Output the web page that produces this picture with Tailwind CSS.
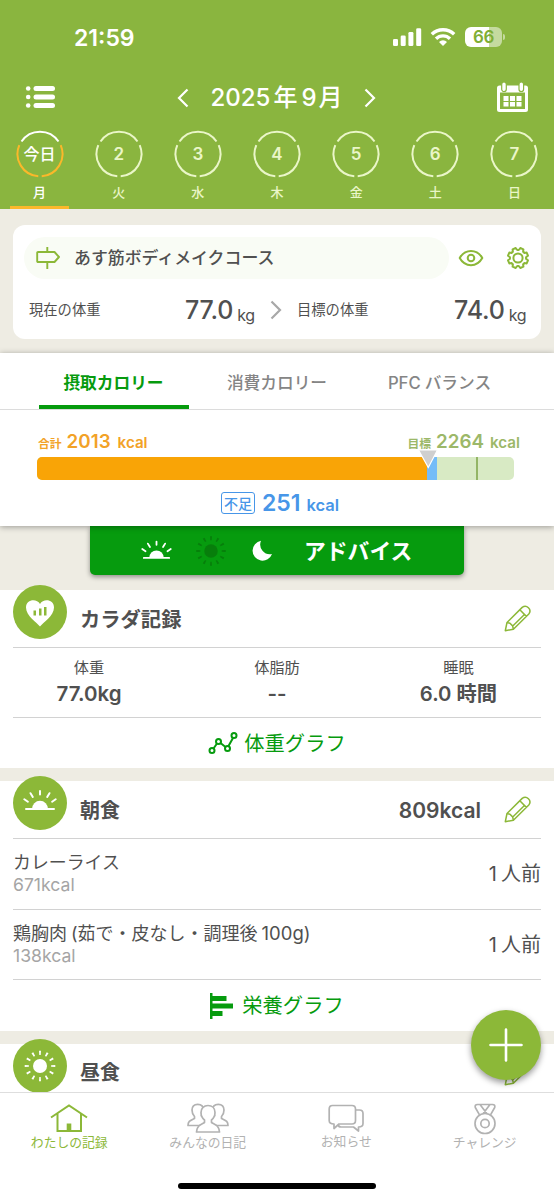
<!DOCTYPE html>
<html lang="ja">
<head>
    <meta charset="UTF-8">
    <meta name="viewport" content="width=device-width, initial-scale=1.0">
    <title>わたしの記録</title>
    <script src="https://cdn.jsdelivr.net/npm/@tailwindcss/browser@4"></script>
</head>

<body class="bg-[#eeece3] text-[#505050] font-['Inter','Noto_Sans_CJK_JP',sans-serif] leading-none whitespace-nowrap">

  <!-- shared icons -->
  <svg class="hidden">
    <symbol id="ring-top" viewBox="0 0 48 48"><path d="M5.5 11.5A22.3 22.3 0 0 1 42.5 11.5" fill="none" stroke="currentColor" stroke-width="2"/></symbol>
    <symbol id="ring-bottom" viewBox="0 0 48 48"><path d="M44.7 15.2A22.3 22.3 0 0 1 25.7 46.2M22.3 46.2A22.3 22.3 0 0 1 3.3 15.2" fill="none" stroke="currentColor" stroke-width="2"/></symbol>
    <symbol id="sunrise" viewBox="0 0 54 54">
      <path d="M13 33H41M27 15V18.5M17.5 17.2L19.8 21M36.5 17.2L34.2 21M11.3 23.2L14.9 25.7M42.7 23.2L39.1 25.7" stroke="currentColor" stroke-width="2" stroke-linecap="round"/>
      <path d="M19 33a8 8.3 0 0 1 16 0z" fill="currentColor"/>
    </symbol>
    <symbol id="sun" viewBox="0 0 54 54">
      <circle cx="27" cy="27" r="7" fill="currentColor"/>
      <circle cx="27" cy="27" r="13.2" fill="none" stroke="currentColor" stroke-width="4.2" pathLength="120" stroke-dasharray="2.6 7.4" stroke-dashoffset="1.3"/>
    </symbol>
    <symbol id="pencil" viewBox="0 0 27 27">
      <path d="M1.3 25.7L3 17.5L18.2 2.4a4.7 4.7 0 0 1 6.6 6.6L9.4 24.2ZM3 17.5L6 18.3L8.6 20.9L9.4 24.2M15.8 4.8L22.4 11.4M20.2 9.8L9 20.8" fill="none" stroke="currentColor" stroke-width="1.5" stroke-linejoin="round"/>
    </symbol>
  </svg>

  <header class="h-[209px] bg-[#8ab53f] text-white">
    <div class="h-[75px] flex justify-between pl-[74px] pr-[49px]">
      <div class="text-[23px] font-semibold pt-[27px]">21:59</div>
      <div class="flex pt-[27px]">
        <svg class="w-[30px] h-5" viewBox="0 0 30 20" fill="currentColor"><rect x="1" y="12" width="5" height="7" rx="1.3"/><rect x="8.7" y="8.5" width="5" height="10.5" rx="1.3"/><rect x="16.4" y="5" width="5" height="14" rx="1.3"/><rect x="24.2" y="1.3" width="5" height="17.7" rx="1.3"/></svg>
        <svg class="w-[26px] h-5 ml-2" viewBox="0 0 26 20" fill="none" stroke="currentColor" stroke-width="3.4"><path d="M1.8 7.3a16 16 0 0 1 22.4 0M6 11.7a10 10 0 0 1 14 0"/><path d="M9 15a5.7 5.7 0 0 1 8 0L13 19z" fill="currentColor" stroke="none"/></svg>
        <div class="ml-[9px] w-[37px] h-5 rounded-[6px] bg-linear-to-r from-white from-66% to-white/50 to-66% text-[#7fae35] text-[17px] tracking-[-0.3px] font-semibold flex items-center justify-center">66</div>
        <div class="ml-px mt-[7px] w-[2px] h-[6px] rounded-r bg-white/50"></div>
      </div>
    </div>

    <div class="h-[44px] flex items-center justify-between pl-[25px] pr-[26px]">
      <svg class="w-[31px] h-6" viewBox="0 0 31 24" fill="currentColor"><circle cx="3.2" cy="3.5" r="2.3"/><circle cx="3.2" cy="12" r="2.3"/><circle cx="3.2" cy="20.5" r="2.3"/><rect x="8.5" y="1" width="21.5" height="5" rx="2.5"/><rect x="8.5" y="9.5" width="21.5" height="5" rx="2.5"/><rect x="8.5" y="18" width="21.5" height="5" rx="2.5"/></svg>
      <div class="flex items-center pt-px">
        <svg class="w-3 h-5" viewBox="0 0 12 20" fill="none" stroke="currentColor" stroke-width="2.2"><path d="M10.5 1.5L2 10L10.5 18.5"/></svg>
        <div class="w-[175px] text-center text-[24px] font-medium pt-px">2025<span class="ml-[3px] mr-[4px]">年</span>9<span class="ml-[2px]">月</span></div>
        <svg class="w-3 h-5" viewBox="0 0 12 20" fill="none" stroke="currentColor" stroke-width="2.2"><path d="M1.5 1.5L10 10L1.5 18.5"/></svg>
      </div>
      <svg class="w-[31px] h-[30px]" viewBox="0 0 31 30"><rect x="1.5" y="5" width="28" height="23.5" rx="1" fill="none" stroke="#fff" stroke-width="3"/><path d="M1 4H30V10.5H1z" fill="#fff"/><path d="M6.5 14h5v5h-5zM13 14h5v5h-5zM19.5 14h5v5h-5zM6.5 20h5v4.5h-5zM13 20h5v4.5h-5zM19.5 20h5v4.5h-5z" fill="#fff"/><rect x="4.7" y="0" width="4.6" height="9.5" rx="2.3" fill="#fff" stroke="#8ab53f" stroke-width="1.2"/><rect x="22" y="0" width="4.6" height="9.5" rx="2.3" fill="#fff" stroke="#8ab53f" stroke-width="1.2"/></svg>
    </div>

    <div class="grid grid-cols-7 h-[90px] pt-[11px] text-[#eaf6c8] text-[13px] font-medium text-center">
      <div class="flex flex-col items-center text-white">
        <div class="relative size-12 flex items-center justify-center text-[16px]">
          <svg class="absolute inset-0 size-12"><use href="#ring-top"/></svg>
          <svg class="absolute inset-0 size-12 text-[#fbb82a]"><use href="#ring-bottom"/></svg>
          今日
        </div>
        <div class="mt-[8px] h-[17px]">月</div>
        <div class="mt-[3px] w-[59px] h-[3px] bg-[#fbb82a]"></div>
      </div>
      <div class="flex flex-col items-center">
        <div class="relative size-12 flex items-center justify-center text-[17px] font-semibold pt-px"><svg class="absolute inset-0 size-12"><use href="#ring-top"/><use href="#ring-bottom"/></svg>2</div>
        <div class="mt-[8px]">火</div>
      </div>
      <div class="flex flex-col items-center">
        <div class="relative size-12 flex items-center justify-center text-[17px] font-semibold pt-px"><svg class="absolute inset-0 size-12"><use href="#ring-top"/><use href="#ring-bottom"/></svg>3</div>
        <div class="mt-[8px]">水</div>
      </div>
      <div class="flex flex-col items-center">
        <div class="relative size-12 flex items-center justify-center text-[17px] font-semibold pt-px"><svg class="absolute inset-0 size-12"><use href="#ring-top"/><use href="#ring-bottom"/></svg>4</div>
        <div class="mt-[8px]">木</div>
      </div>
      <div class="flex flex-col items-center">
        <div class="relative size-12 flex items-center justify-center text-[17px] font-semibold pt-px"><svg class="absolute inset-0 size-12"><use href="#ring-top"/><use href="#ring-bottom"/></svg>5</div>
        <div class="mt-[8px]">金</div>
      </div>
      <div class="flex flex-col items-center">
        <div class="relative size-12 flex items-center justify-center text-[17px] font-semibold pt-px"><svg class="absolute inset-0 size-12"><use href="#ring-top"/><use href="#ring-bottom"/></svg>6</div>
        <div class="mt-[8px]">土</div>
      </div>
      <div class="flex flex-col items-center">
        <div class="relative size-12 flex items-center justify-center text-[17px] font-semibold pt-px"><svg class="absolute inset-0 size-12"><use href="#ring-top"/><use href="#ring-bottom"/></svg>7</div>
        <div class="mt-[8px]">日</div>
      </div>
    </div>
  </header>

  <!-- course card -->
  <div class="mx-[13px] mt-4 h-[114px] rounded-xl bg-white px-[11px] pt-[12px]">
    <div class="flex items-center">
      <div class="w-[425px] h-[42px] rounded-full bg-[#f9fcf5] flex items-center pl-[12px] text-[16.9px] font-medium">
        <svg class="w-6 h-[22px] mr-[14px] text-[#8cb838]" viewBox="0 0 24 22" fill="none" stroke="currentColor" stroke-width="1.9" stroke-linejoin="round"><path d="M11.3 0V5M11.3 15V22M2 5H18.5L23 10L18.5 15H2a.8.8 0 0 1-.8-.8V5.8A.8.8 0 0 1 2 5z"/></svg>
        あす筋ボディメイクコース
      </div>
      <svg class="w-[26px] h-[18px] ml-[9px] text-[#8cb838]" viewBox="0 0 26 18" fill="none" stroke="currentColor" stroke-width="2"><path d="M1.7 9C7-.5 19-.5 24.3 9C19 18.5 7 18.5 1.7 9z" stroke-linejoin="round"/><circle cx="13" cy="9" r="3.3"/></svg>
      <svg class="size-6 ml-[22px] text-[#8cb838]" viewBox="-12 -12 24 24" fill="none" stroke="currentColor" stroke-width="2">
        <circle r="4.6"/>
        <g transform="rotate(22.5)">
          <path id="tooth" d="M-3.1 -7.5L-2.2 -8L-1.7 -10.1H1.7L2.2 -8L3.1 -7.5" stroke-linejoin="round" stroke-linecap="round"/>
          <use href="#tooth" transform="rotate(45)"/><use href="#tooth" transform="rotate(90)"/><use href="#tooth" transform="rotate(135)"/><use href="#tooth" transform="rotate(180)"/><use href="#tooth" transform="rotate(225)"/><use href="#tooth" transform="rotate(270)"/><use href="#tooth" transform="rotate(315)"/>
        </g>
      </svg>
    </div>
    <div class="flex items-center h-[60px] pl-[5px] text-[14.3px]">
      <div class="w-[156px] pt-[2px]">現在の体重</div>
      <div class="flex items-baseline w-[70px] pt-[2px] text-[25px] tracking-[-0.2px] font-medium">77.0<span class="relative top-[2px] text-[16px] tracking-[-0.3px] font-normal ml-[4px]">kg</span></div>
      <svg class="w-3 h-5 ml-[15px] mt-px text-[#a8a8a8]" viewBox="0 0 12 20" fill="none" stroke="currentColor" stroke-width="2.2"><path d="M1.5 1.5L10 10L1.5 18.5"/></svg>
      <div class="w-[157px] ml-[15px] pt-[2px]">目標の体重</div>
      <div class="flex items-baseline pt-[2px] text-[25px] tracking-[-0.2px] font-medium">74.0<span class="relative top-[2px] text-[16px] tracking-[-0.3px] font-normal ml-[4px]">kg</span></div>
    </div>
  </div>

  <!-- calorie panel -->
  <div class="relative mt-[14px] h-[173px] bg-white shadow-[0_1px_6px_rgba(0,0,0,0.35)]">
    <div class="flex justify-between h-[57px] px-[39px] border-b border-[#dcdcdc] text-[16.7px] font-medium text-[#858585]">
      <div class="w-[150px] h-[56px] border-b-4 border-[#069b0e] text-[#069b0e] font-bold flex items-center justify-center pt-[8px] pr-px">摂取カロリー</div>
      <div class="w-[150px] flex items-center justify-center pt-[4px]">消費カロリー</div>
      <div class="w-[150px] flex items-center justify-center pt-[4px] pr-px">PFC<span class="ml-[4px]">バランス</span></div>
    </div>
    <div class="flex justify-between items-baseline h-[47px] pt-[23px] pl-[38px] pr-[34px] font-semibold">
      <div class="text-[#f2a227]"><span class="text-[11.8px]">合計</span><span class="text-[18.8px] ml-[5px]">2013</span><span class="text-[15.2px] ml-[7px]">kcal</span></div>
      <div class="text-[#9cb869]"><span class="text-[11.8px]">目標</span><span class="text-[18.8px] ml-[5px]">2264</span><span class="text-[15.2px] ml-[6px]">kcal</span></div>
    </div>
    <div class="relative ml-[37px] w-[477px] h-[23px] rounded-[5px] bg-[#d8eac4]">
      <div class="flex h-full">
        <div class="w-[390px] bg-[#f9a406] rounded-l-[5px]"></div>
        <div class="w-[10px] bg-[#74bcf8]"></div>
        <div class="w-[2px] ml-[39px] bg-[#93b565]"></div>
      </div>
      <svg class="absolute left-[381px] -top-[8px] w-5 h-[20px]" viewBox="0 0 20 20"><path d="M.5 1H19.5L10.3 18.5z" fill="#cfcfcf" stroke="#fff" stroke-width="1.2"/></svg>
    </div>
    <div class="flex items-center justify-center h-[46px] text-[#4796e8] font-medium pl-[6px]">
      <div class="w-[34px] h-[22px] border-[1.5px] border-[#4796e8] rounded-[3px] text-[14px] flex items-center justify-center pt-px">不足</div>
      <div class="ml-[7px] text-[23px] font-semibold">251<span class="text-[16.5px] ml-[6px]">kcal</span></div>
    </div>
  </div>

  <div class="mx-auto w-[374px] h-[49px] rounded-b-[5px] bg-[#069b0e] text-white shadow-[0_2px_5px_rgba(0,0,0,0.4)] flex items-center pl-[42px]">
    <svg class="size-[49px] mt-[3px]"><use href="#sunrise"/></svg>
    <svg class="size-[52px] ml-[4px] text-[#077e0b]"><use href="#sun"/></svg>
    <svg class="w-[21px] h-[21px] ml-[15px]" viewBox="0 0 21 21" fill="currentColor"><path d="M9 .8A10 10 0 1 0 20 14A9.7 9.7 0 0 1 9 .8z"/></svg>
    <div class="ml-[31px] pt-[3px] text-[21.8px] font-bold">アドバイス</div>
  </div>

  <!-- body record -->
  <section class="mt-[15px] h-[178px] bg-white px-[13px]">
    <div class="flex h-[58px] border-b border-[#d2d2d2]">
      <svg class="size-[54px] -mt-[5px]" viewBox="0 0 54 54"><circle cx="27" cy="27" r="27" fill="#8cb838"/><path d="M27 41.5C24 37.5 13 31 13 22.5C13 14.5 23.5 13 27 19C30.5 13 41 14.5 41 22.5C41 31 30 37.5 27 41.5z" fill="#fff"/><path d="M20.5 25.5h2.5v5h-2.5zM26 23.5h2.5v7h-2.5zM31 22h2.5v8.5h-2.5z" fill="#8cb838"/></svg>
      <div class="flex-1 pl-[13px] pt-[4px] flex items-center text-[20.3px] font-bold">カラダ記録</div>
      <svg class="size-[27px] mt-[15px] mr-[10px] text-[#8cb838]"><use href="#pencil"/></svg>
    </div>
    <div class="flex justify-between h-[70px] border-b border-[#d2d2d2] pt-[12px] text-[15.2px] text-center">
      <div class="w-[152px]">体重<div class="mt-[9px] text-[20.5px] font-semibold">77.0kg</div></div>
      <div class="w-[152px] ml-[13px]">体脂肪<div class="mt-[9px] text-[20.5px] font-semibold">--</div></div>
      <div class="w-[165px]">睡眠<div class="mt-[9px] text-[20.3px] font-semibold">6.0 時間</div></div>
    </div>
    <div class="flex items-center justify-center h-[50px] text-[#069b0e] text-[20.3px]">
      <svg class="w-[30px] h-[22px] mr-[6px]" viewBox="0 0 30 22" fill="none" stroke="currentColor" stroke-width="2"><circle cx="4" cy="18.5" r="2.5"/><circle cx="10.5" cy="9.5" r="2.5"/><circle cx="19.5" cy="16.5" r="2.5"/><circle cx="26" cy="3.5" r="2.5"/><path d="M5.5 16.5L9 11.5M12.5 11L17.5 15M20.5 14L25 6"/></svg>
      <span class="pt-[2px]">体重グラフ</span>
    </div>
  </section>

  <!-- breakfast -->
  <section class="mt-[13px] h-[250px] bg-white px-[13px]">
    <div class="flex h-[58px] border-b border-[#d2d2d2]">
      <div class="size-[54px] -mt-[5px] rounded-full bg-[#8cb838] text-white"><svg class="size-[54px]"><use href="#sunrise"/></svg></div>
      <div class="flex-1 pl-[13px] pt-[3px] flex items-center text-[20px] font-bold">朝食</div>
      <div class="flex items-center mr-[23px] pt-px text-[21px] font-semibold">809kcal</div>
      <svg class="size-[27px] mt-[15px] mr-[10px] text-[#8cb838]"><use href="#pencil"/></svg>
    </div>
    <div class="flex justify-between items-center h-[71px] border-b border-[#d2d2d2]">
      <div class="text-[17.9px]">カレーライス<div class="mt-[4px] text-[17.6px] text-[#a5a5a5]">671kcal</div></div>
      <div class="text-[20px]">1<span class="ml-[4px]">人前</span></div>
    </div>
    <div class="flex justify-between items-center h-[70px] border-b border-[#d2d2d2]">
      <div class="text-[18px]">鶏胸肉<span class="ml-[4px]">(茹で・皮なし・調理後</span><span class="ml-[4px] text-[18.5px]">100g)</span><div class="mt-[4px] text-[17.6px] text-[#a5a5a5]">138kcal</div></div>
      <div class="text-[20px]">1<span class="ml-[4px]">人前</span></div>
    </div>
    <div class="flex items-center justify-center h-[51px] text-[#069b0e] text-[20.3px]">
      <svg class="w-[23px] h-[26px] mr-[9px]" viewBox="0 0 23 26" fill="currentColor"><path d="M0 0h2.5v26h-2.5zM2.5 3h14v5h-14zM2.5 10.5h20.5v5h-20.5zM2.5 18h10v5h-10z"/></svg>
      <span class="pt-[2px]">栄養グラフ</span>
    </div>
  </section>

  <!-- lunch -->
  <section class="mt-[13px] h-[48px] bg-white px-[13px]">
    <div class="flex h-[58px]">
      <div class="size-[54px] -mt-[5px] rounded-full bg-[#8cb838] text-white"><svg class="size-[54px]"><use href="#sun"/></svg></div>
      <div class="flex-1 pl-[13px] flex items-center text-[20px] font-bold">昼食</div>
      <svg class="size-[27px] mt-[15px] mr-[10px] text-[#8cb838]"><use href="#pencil"/></svg>
    </div>
  </section>

  <button class="fixed left-[471px] top-[1010px] size-[70px] rounded-full bg-[#8cb838] shadow-[0_3px_6px_rgba(0,0,0,0.4)] flex items-center justify-center">
    <svg class="size-[34px]" viewBox="0 0 34 34" stroke="#fff" stroke-width="2.6" stroke-linecap="round"><path d="M17 1.5V32.5M1.5 17H32.5"/></svg>
  </button>

  <nav class="fixed inset-x-0 bottom-0 h-[108px] bg-white border-t border-[#dedede] text-[12.8px] text-[#b2b2b2]">
    <div class="grid grid-cols-4 h-[90px] pt-[9px]">
      <div class="flex flex-col items-center text-[#8cb838]">
        <svg class="w-[38px] h-[32px]" viewBox="0 0 38 32" fill="none" stroke="currentColor" stroke-width="2"><path d="M1 15.5L19 3.5L37 15.5M7.5 11.5V29H31V11.5"/><path d="M16.7 21.5h4.6v7.5h-4.6z" fill="currentColor" stroke="none"/></svg>
        <div class="mt-[3px]">わたしの記録</div>
      </div>
      <div class="flex flex-col items-center">
        <svg class="w-[42px] h-[32px]" viewBox="0 0 42 32" fill="#fff" stroke="currentColor" stroke-width="1.7" stroke-linejoin="round">
          <path id="side" d="M14 23.5H1C1 19 3.5 18.5 7.5 16.5V14.5C5.5 12.5 5 10.5 5 8C5 4.5 7 2.3 10.7 2.3S16.5 4.5 16.5 8C16.5 10.5 15.5 12.5 14 14.5"/>
          <use href="#side" transform="matrix(-1 0 0 1 42 0)"/>
          <path d="M17.5 18C15 16 14 13.5 14 10.5C14 6 17 3.5 21 3.5S28 6 28 10.5C28 13.5 27 16 24.5 18V20.5C27 22.5 32 22.5 32.5 30H9.5C10 22.5 15 22.5 17.5 20.5z"/>
        </svg>
        <div class="mt-[3px]">みんなの日記</div>
      </div>
      <div class="flex flex-col items-center">
        <svg class="w-[36px] h-[32px]" viewBox="0 0 36 32" fill="#fff" stroke="currentColor" stroke-width="1.7" stroke-linejoin="round">
          <path d="M10 22.5Q10.5 25 13 25H25.5L30.5 29V25Q35 25 35 21.5V11.5Q35 8 31.5 8H26"/>
          <path d="M4.5 3.5H24Q27.5 3.5 27.5 7V18.5Q27.5 22 24 22H11L6 26.5V22Q1.2 22 1.2 18.5V7Q1.2 3.5 4.5 3.5z"/>
        </svg>
        <div class="mt-[2px]">お知らせ</div>
      </div>
      <div class="flex flex-col items-center">
        <svg class="w-[24px] h-[33px]" viewBox="0 0 24 33" fill="none" stroke="currentColor" stroke-width="1.7" stroke-linejoin="round">
          <path d="M6.5 12.8L2.3 5.5Q1.5 2.5 4.5 2.5H19.5Q22.5 2.5 21.7 5.5L17.5 12.8M7 2.5L13.8 11.5M17 2.5L10.2 11.5"/>
          <circle cx="12" cy="21.5" r="10"/><circle cx="12" cy="21.5" r="4.2"/>
        </svg>
        <div class="mt-[2px]">チャレンジ</div>
      </div>
    </div>
    <div class="mx-auto w-[198px] h-[6px] rounded-full bg-black"></div>
  </nav>

</body>
</html>
